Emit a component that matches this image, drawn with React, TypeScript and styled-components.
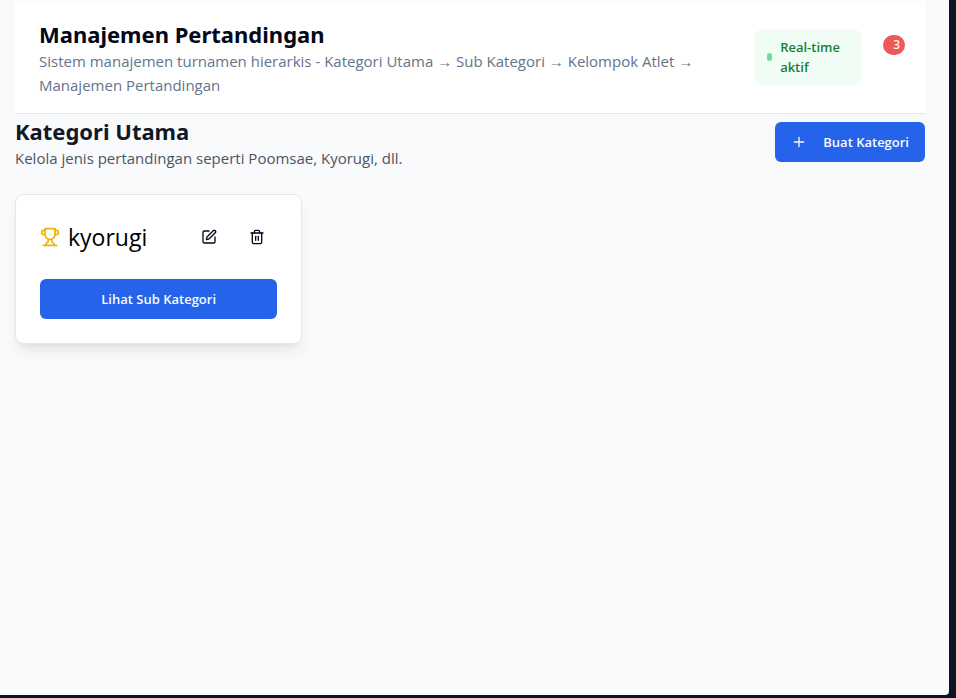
import React from "react";
import styled, { createGlobalStyle } from "styled-components";
import { Plus, SquarePen } from "lucide-react";

const GlobalStyle = createGlobalStyle`
  *, *::before, *::after { box-sizing: border-box; }
  body {
    margin: 0;
    background: #0c1424;
    color: #020817;
    font-family: "Segoe UI", "Open Sans", "Noto Sans", sans-serif;
    font-size: 15px;
    line-height: 24px;
  }
  h1, h2, h3, p { margin: 0; }
  button { font-family: inherit; cursor: pointer; }
`;

const Frame = styled.div`
  min-height: 100vh;
  display: flex;
  padding: 0 7px 3px 0;
`;

const Page = styled.main`
  flex: 1;
  min-width: 0;
  padding: 1px 24px 24px 15px;
  background: #f9fafc;
  border-bottom-right-radius: 4px;
`;

const Header = styled.header`
  display: flex;
  align-items: center;
  justify-content: space-between;
  padding: 16px 20px 16px 24px;
  background: #ffffff;
  border-bottom: 1px solid #e2e8f0;
`;

const HeaderText = styled.div`
  flex: 0 1 672px;
`;

const Title = styled.h1`
  padding-top: 2px;
  font-family: "Segoe UI", "Noto Sans", "Open Sans", sans-serif;
  font-size: 22px;
  line-height: 30px;
  font-weight: 700;
  color: #020817;
`;

const Subtitle = styled.p`
  color: #64748b;
`;

const Status = styled.div`
  display: flex;
  align-items: center;
  gap: 22px;
`;

const RealtimePill = styled.div`
  display: flex;
  align-items: center;
  gap: 8px;
  width: 106px;
  padding: 8px 12px;
  border-radius: 8px;
  background: #f0fdf4;
  color: #15803d;
  font-size: 13px;
  line-height: 20px;
  font-weight: 600;
`;

const Dot = styled.span`
  flex: none;
  width: 5px;
  height: 8px;
  border-radius: 4px;
  background: #73db98;
`;

const CountBadge = styled.span`
  align-self: flex-start;
  margin-top: 6px;
  padding: 0 5px 0 10px;
  border-radius: 10px;
  background: #ed5858;
  color: #fdf0f0;
  font-size: 12px;
  line-height: 20px;
  font-weight: 600;
`;

const SectionHead = styled.div`
  display: flex;
  align-items: center;
  justify-content: space-between;
  margin-bottom: 24px;
`;

const SectionTitle = styled(Title).attrs({ as: "h2" })`
  color: #111827;
`;

const SectionText = styled.p`
  color: #4b5563;
`;

const PrimaryButton = styled.button<{ $block?: boolean }>`
  display: flex;
  align-items: center;
  justify-content: center;
  gap: 16px;
  width: ${(p) => (p.$block ? "100%" : "auto")};
  height: 40px;
  padding: 0 16px;
  border: 0;
  border-radius: 6px;
  background: #2563eb;
  color: #f8fafc;
  font-size: 13px;
  line-height: 20px;
  font-weight: 600;
  white-space: nowrap;
`;

const CardGrid = styled.div`
  display: grid;
  grid-template-columns: repeat(3, minmax(0, 1fr));
  gap: 24px;
`;

const Card = styled.article`
  display: flex;
  flex-direction: column;
  gap: 24px;
  padding: 24px;
  border: 1px solid #e5e7eb;
  border-radius: 8px;
  background: #ffffff;
  box-shadow: 0 10px 15px -3px rgba(0, 0, 0, 0.08), 0 4px 6px -4px rgba(0, 0, 0, 0.08);
`;

const CardHead = styled.div`
  display: flex;
  align-items: center;
  justify-content: space-between;
`;

const CardName = styled.h3`
  display: flex;
  align-items: center;
  gap: 8px;
  font-size: 23px;
  line-height: 36px;
  font-weight: 500;
  color: #000000;
`;

const Actions = styled.div`
  display: flex;
  gap: 8px;
`;

const IconButton = styled.button`
  display: flex;
  align-items: center;
  justify-content: center;
  width: 40px;
  height: 36px;
  padding: 0;
  border: 0;
  border-radius: 6px;
  background: transparent;
  color: #020817;
`;

const LineIcon = ({ size, color = "currentColor", children }: { size: number; color?: string; children: React.ReactNode }) => (
  <svg
    width={size}
    height={size}
    viewBox="0 0 24 24"
    fill="none"
    stroke={color}
    strokeWidth="2"
    strokeLinecap="round"
    strokeLinejoin="round"
    aria-hidden="true"
  >
    {children}
  </svg>
);

const TrophyIcon = () => (
  <LineIcon size={20} color="#eab308">
    <path d="M6 9H4.5a2.5 2.5 0 0 1 0-5H6" />
    <path d="M18 9h1.5a2.5 2.5 0 0 0 0-5H18" />
    <path d="M4 22h16" />
    <path d="M10 14.66V17c0 .55-.47.98-.97 1.21C7.85 18.75 7 20.24 7 22" />
    <path d="M14 14.66V17c0 .55.47.98.97 1.21C16.15 18.75 17 20.24 17 22" />
    <path d="M18 2H6v7a6 6 0 0 0 12 0V2Z" />
  </LineIcon>
);

const TrashIcon = () => (
  <LineIcon size={16}>
    <path d="M3 6h18" />
    <path d="M19 6v14c0 1-1 2-2 2H7c-1 0-2-1-2-2V6" />
    <path d="M8 6V4c0-1 1-2 2-2h4c1 0 2 1 2 2v2" />
    <path d="M10 11v6" />
    <path d="M14 11v6" />
  </LineIcon>
);

const categories = ["kyorugi"];

export default function App() {
  return (
    <Frame>
      <GlobalStyle />
      <Page>
        <Header>
          <HeaderText>
            <Title>Manajemen Pertandingan</Title>
            <Subtitle>
              Sistem manajemen turnamen hierarkis - Kategori Utama → Sub Kategori → Kelompok Atlet → Manajemen
              Pertandingan
            </Subtitle>
          </HeaderText>
          <Status>
            <RealtimePill>
              <Dot />
              <span>Real-time aktif</span>
            </RealtimePill>
            <CountBadge>3</CountBadge>
          </Status>
        </Header>
        <SectionHead>
          <div>
            <SectionTitle>Kategori Utama</SectionTitle>
            <SectionText>Kelola jenis pertandingan seperti Poomsae, Kyorugi, dll.</SectionText>
          </div>
          <PrimaryButton type="button">
            <Plus size={16} strokeWidth={2} aria-hidden="true" />
            Buat Kategori
          </PrimaryButton>
        </SectionHead>
        <CardGrid>
          {categories.map((name) => (
            <Card key={name}>
              <CardHead>
                <CardName>
                  <TrophyIcon />
                  {name}
                </CardName>
                <Actions>
                  <IconButton type="button" aria-label={`Edit ${name}`}>
                    <SquarePen size={16} />
                  </IconButton>
                  <IconButton type="button" aria-label={`Hapus ${name}`}>
                    <TrashIcon />
                  </IconButton>
                </Actions>
              </CardHead>
              <PrimaryButton type="button" $block>
                Lihat Sub Kategori
              </PrimaryButton>
            </Card>
          ))}
        </CardGrid>
      </Page>
    </Frame>
  );
}
